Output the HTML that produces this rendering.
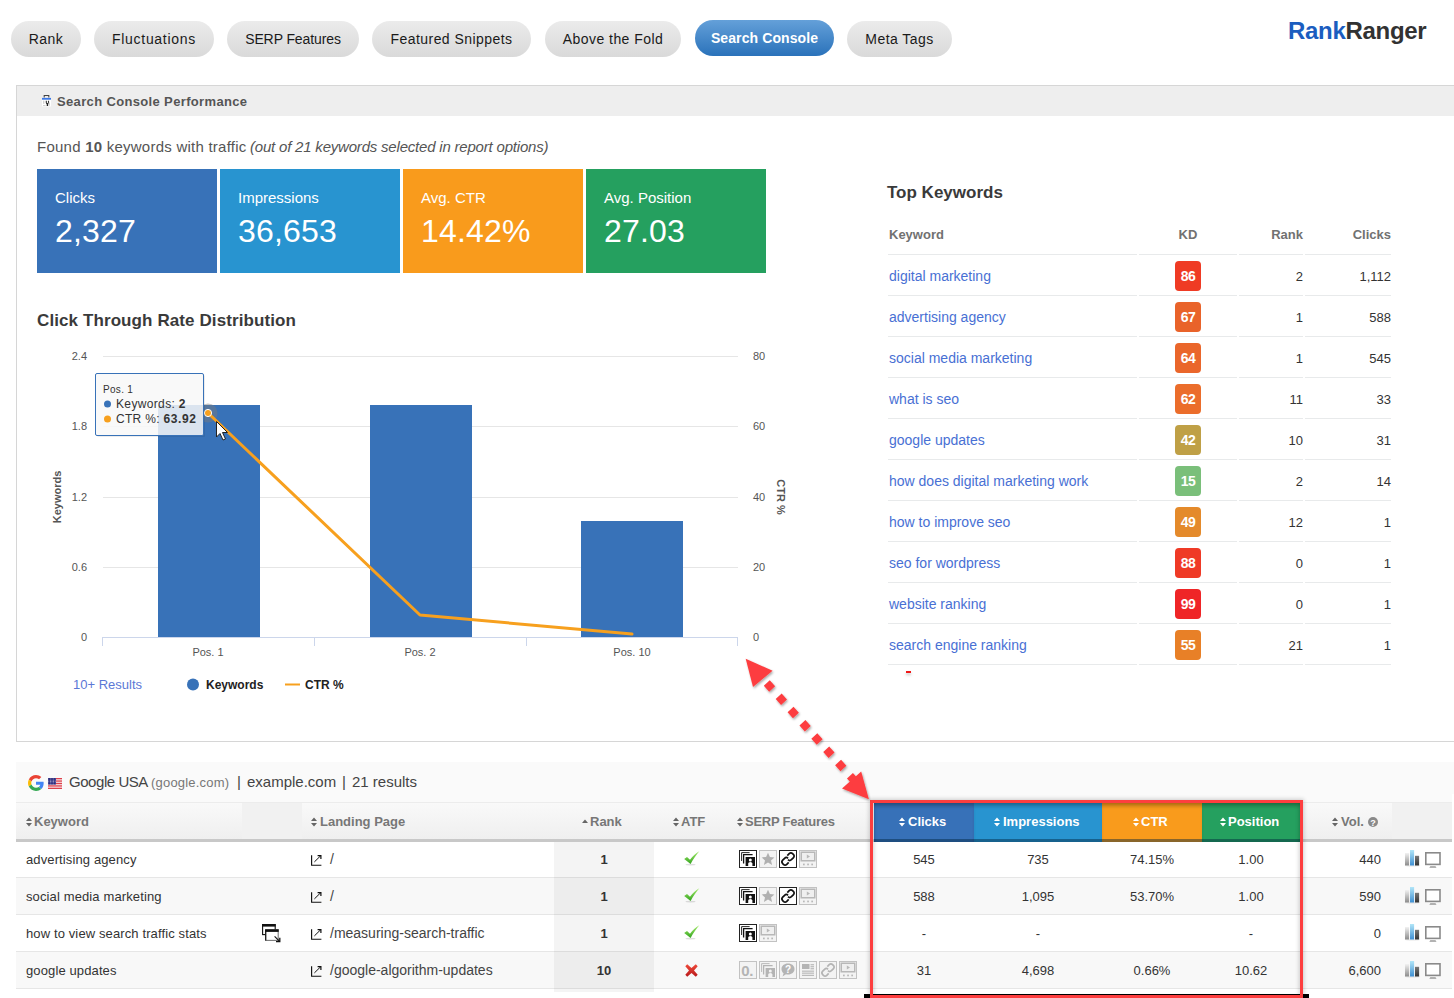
<!DOCTYPE html>
<html><head><meta charset="utf-8">
<style>
*{box-sizing:border-box;margin:0;padding:0}
html,body{width:1454px;height:998px;overflow:hidden;background:#fff}
body{font-family:"Liberation Sans",sans-serif;color:#333;position:relative}
.a{position:absolute;white-space:nowrap}
.tab{position:absolute;top:21px;height:36px;border-radius:18px;background:linear-gradient(#ebebeb,#d9d9d9);color:#1a1a1a;font-size:14px;line-height:36px;text-align:center;letter-spacing:0.45px}
.tab.on{top:20px;background:linear-gradient(#64a0d9,#2a72ba);color:#fff;font-weight:bold;letter-spacing:0.1px}
.logo{position:absolute;left:1288px;top:16px;font-size:24px;font-weight:bold;letter-spacing:-0.3px;line-height:30px}
.panel{position:absolute;left:16px;top:85px;width:1460px;height:657px;border:1px solid #d6d6d6;border-right:none}
.phead{position:absolute;left:0;top:0;right:0;height:30px;background:#eee}
.box{position:absolute;top:169px;width:180px;height:104px;color:#fff}
.box .l{position:absolute;left:18px;top:20px;font-size:15px;line-height:18px}
.box .v{position:absolute;left:18px;top:44px;font-size:32px;line-height:36px;letter-spacing:0.2px}
</style></head><body>

<div class="tab" style="left:11px;width:70px">Rank</div>
<div class="tab" style="left:94px;width:120px;letter-spacing:0.7px">Fluctuations</div>
<div class="tab" style="left:227px;width:132px;letter-spacing:-0.1px">SERP Features</div>
<div class="tab" style="left:372px;width:159px">Featured Snippets</div>
<div class="tab" style="left:545px;width:136px">Above the Fold</div>
<div class="tab on" style="left:695px;width:139px">Search Console</div>
<div class="tab" style="left:847px;width:105px">Meta Tags</div>

<div class="logo"><span style="color:#1b5dbf">Rank</span><span style="color:#323232">Ranger</span></div>

<div class="panel">
  <div class="phead"></div>
</div>

<div class="a" style="left:41px;top:93px;width:11px;height:13px"><svg width="11" height="13" viewBox="0 0 11 13"><rect x="1" y="5.4" width="9" height="7" fill="#fff"/><path d="M3.2 3.6 V1.5 H7.8 V3.6" fill="none" stroke="#444" stroke-width="1.1"/><rect x="1" y="3.9" width="9" height="1.8" fill="#3b78e7"/><rect x="2.2" y="6.6" width="1.1" height="3.2" fill="#c8c8c8"/><rect x="2" y="11.2" width="2.6" height="0.8" fill="#c8c8c8"/><path d="M5.3 6.8 V8.5 Q5.3 9.6 6.4 9.6 Q7.5 9.6 7.5 8.5 V6.8" fill="none" stroke="#333" stroke-width="1.1"/><path d="M6.4 9.4 V12" stroke="#222" stroke-width="1.4"/><rect x="7.6" y="8.5" width="1" height="3.2" fill="#bbb"/></svg></div>
<div class="a" style="left:57px;top:94px;font-size:13px;font-weight:bold;color:#555;line-height:16px;letter-spacing:0.35px">Search Console Performance</div>

<div class="a" style="left:37px;top:138px;font-size:15px;color:#555;line-height:18px;letter-spacing:0.24px">Found <b>10</b> keywords with traffic</div>
<div class="a" style="left:250px;top:138px;font-size:15px;color:#555;line-height:18px;letter-spacing:-0.2px;font-style:italic">(out of 21 keywords selected in report options)</div>

<div class="box" style="left:37px;background:#3872b8"><div class="l">Clicks</div><div class="v">2,327</div></div>
<div class="box" style="left:220px;background:#2894d0"><div class="l">Impressions</div><div class="v">36,653</div></div>
<div class="box" style="left:403px;background:#f99b1c"><div class="l">Avg. CTR</div><div class="v">14.42%</div></div>
<div class="box" style="left:586px;background:#25a05f"><div class="l">Avg. Position</div><div class="v">27.03</div></div>

<div class="a" style="left:37px;top:311px;font-size:17px;font-weight:bold;color:#3a3a3a;line-height:20px;letter-spacing:0.1px">Click Through Rate Distribution</div>

<svg class="a" style="left:0;top:0" width="1454" height="998" viewBox="0 0 1454 998" font-family="Liberation Sans, sans-serif">
<g stroke="#e6e6e6" stroke-width="1">
<line x1="103" y1="356.5" x2="738" y2="356.5"/><line x1="103" y1="426.5" x2="738" y2="426.5"/><line x1="103" y1="497.5" x2="738" y2="497.5"/><line x1="103" y1="567.5" x2="738" y2="567.5"/>
</g>
<g stroke="#ccd6eb" stroke-width="1">
<line x1="103" y1="637.5" x2="738" y2="637.5"/>
<line x1="102.5" y1="637" x2="102.5" y2="646"/><line x1="314.5" y1="637" x2="314.5" y2="646"/><line x1="526.5" y1="637" x2="526.5" y2="646"/><line x1="737.5" y1="637" x2="737.5" y2="646"/>
</g>
<g fill="#3872b8">
<rect x="158" y="405" width="102" height="232"/><rect x="370" y="405" width="102" height="232"/><rect x="581" y="521" width="102" height="116"/>
</g>
<circle cx="208" cy="413" r="9.5" fill="rgba(125,125,125,0.45)"/>
<polyline points="208,413 420,615 632,634" fill="none" stroke="#f7a01e" stroke-width="3" stroke-linejoin="round" stroke-linecap="round"/>
<circle cx="208" cy="413" r="3.6" fill="#f7a01e" stroke="#fff" stroke-width="1"/>
<g font-size="11" fill="#555" text-anchor="end">
<text x="87" y="360">2.4</text><text x="87" y="430">1.8</text><text x="87" y="501">1.2</text><text x="87" y="571">0.6</text><text x="87" y="641">0</text>
</g>
<g font-size="11" fill="#555" text-anchor="start">
<text x="753" y="360">80</text><text x="753" y="430">60</text><text x="753" y="501">40</text><text x="753" y="571">20</text><text x="753" y="641">0</text>
</g>
<g font-size="11" fill="#555" text-anchor="middle">
<text x="208" y="656">Pos. 1</text><text x="420" y="656">Pos. 2</text><text x="632" y="656">Pos. 10</text>
</g>
<text transform="translate(61,497) rotate(-90)" font-size="11" font-weight="bold" fill="#555" text-anchor="middle">Keywords</text>
<text transform="translate(777,497) rotate(90)" font-size="11" font-weight="bold" fill="#555" text-anchor="middle">CTR %</text>
<text x="73" y="689" font-size="13" fill="#5b78d6">10+ Results</text>
<circle cx="193" cy="684.5" r="6" fill="#3872b8"/>
<text x="206" y="689" font-size="12" font-weight="bold" fill="#222">Keywords</text>
<line x1="285" y1="684.5" x2="300" y2="684.5" stroke="#f7a01e" stroke-width="2"/>
<text x="305" y="689" font-size="12" font-weight="bold" fill="#222">CTR %</text>
<path d="M204 375.5 V436 H97.5" fill="none" stroke="rgba(0,0,0,0.1)" stroke-width="1.5"/><rect x="95.5" y="373.5" width="108" height="62" rx="1.5" fill="rgba(248,248,248,0.85)" stroke="#3872b8" stroke-width="1"/>
<text x="103" y="393" font-size="10" fill="#333" letter-spacing="0.3">Pos. 1</text>
<circle cx="107.5" cy="404" r="3.5" fill="#3872b8"/>
<text x="116" y="408" font-size="12" fill="#333" letter-spacing="0.35">Keywords: <tspan font-weight="bold">2</tspan></text>
<circle cx="107.5" cy="419" r="3.5" fill="#f7a01e"/>
<text x="116" y="423" font-size="12" fill="#333" letter-spacing="0.3">CTR %: <tspan font-weight="bold" letter-spacing="0.6">63.92</tspan></text>
<path d="M216.5 421.5 L216.5 437 L220 433.5 L223 440 L225.5 439 L222.5 432.5 L227.5 432.5 Z" fill="#fff" stroke="#222" stroke-width="1"/>
</svg>
<div class="a" style="left:887px;top:183px;font-size:17px;font-weight:bold;color:#3a3a3a;line-height:20px">Top Keywords</div>
<div class="a" style="left:889px;top:226px;font-size:13px;font-weight:bold;color:#717171;line-height:18px">Keyword</div>
<div class="a" style="left:1139px;width:98px;top:226px;font-size:13px;font-weight:bold;color:#717171;line-height:18px;text-align:center">KD</div>
<div class="a" style="left:1239px;width:64px;top:226px;font-size:13px;font-weight:bold;color:#717171;line-height:18px;text-align:right">Rank</div>
<div class="a" style="left:1305px;width:86px;top:226px;font-size:13px;font-weight:bold;color:#717171;line-height:18px;text-align:right">Clicks</div>
<div class="a" style="left:888px;top:254px;width:249px;height:1px;background:#e8eaeb"></div><div class="a" style="left:1139px;top:254px;width:98px;height:1px;background:#e8eaeb"></div><div class="a" style="left:1239px;top:254px;width:64px;height:1px;background:#e8eaeb"></div><div class="a" style="left:1305px;top:254px;width:86px;height:1px;background:#e8eaeb"></div><div class="a" style="left:889px;top:267px;font-size:14px;color:#4870d4;line-height:18px">digital marketing</div><div class="a" style="left:1175px;top:261px;width:26px;height:30px;border-radius:4px;background:#ef3b24;color:#fff;font-size:14px;font-weight:bold;line-height:30px;text-align:center;letter-spacing:-0.6px">86</div><div class="a" style="left:1239px;width:64px;top:268px;font-size:13px;color:#333;line-height:18px;text-align:right">2</div><div class="a" style="left:1305px;width:86px;top:268px;font-size:13px;color:#333;line-height:18px;text-align:right">1,112</div><div class="a" style="left:888px;top:295px;width:249px;height:1px;background:#e8eaeb"></div><div class="a" style="left:1139px;top:295px;width:98px;height:1px;background:#e8eaeb"></div><div class="a" style="left:1239px;top:295px;width:64px;height:1px;background:#e8eaeb"></div><div class="a" style="left:1305px;top:295px;width:86px;height:1px;background:#e8eaeb"></div><div class="a" style="left:889px;top:308px;font-size:14px;color:#4870d4;line-height:18px">advertising agency</div><div class="a" style="left:1175px;top:302px;width:26px;height:30px;border-radius:4px;background:#e9632a;color:#fff;font-size:14px;font-weight:bold;line-height:30px;text-align:center;letter-spacing:-0.6px">67</div><div class="a" style="left:1239px;width:64px;top:309px;font-size:13px;color:#333;line-height:18px;text-align:right">1</div><div class="a" style="left:1305px;width:86px;top:309px;font-size:13px;color:#333;line-height:18px;text-align:right">588</div><div class="a" style="left:888px;top:336px;width:249px;height:1px;background:#e8eaeb"></div><div class="a" style="left:1139px;top:336px;width:98px;height:1px;background:#e8eaeb"></div><div class="a" style="left:1239px;top:336px;width:64px;height:1px;background:#e8eaeb"></div><div class="a" style="left:1305px;top:336px;width:86px;height:1px;background:#e8eaeb"></div><div class="a" style="left:889px;top:349px;font-size:14px;color:#4870d4;line-height:18px">social media marketing</div><div class="a" style="left:1175px;top:343px;width:26px;height:30px;border-radius:4px;background:#ea662b;color:#fff;font-size:14px;font-weight:bold;line-height:30px;text-align:center;letter-spacing:-0.6px">64</div><div class="a" style="left:1239px;width:64px;top:350px;font-size:13px;color:#333;line-height:18px;text-align:right">1</div><div class="a" style="left:1305px;width:86px;top:350px;font-size:13px;color:#333;line-height:18px;text-align:right">545</div><div class="a" style="left:888px;top:377px;width:249px;height:1px;background:#e8eaeb"></div><div class="a" style="left:1139px;top:377px;width:98px;height:1px;background:#e8eaeb"></div><div class="a" style="left:1239px;top:377px;width:64px;height:1px;background:#e8eaeb"></div><div class="a" style="left:1305px;top:377px;width:86px;height:1px;background:#e8eaeb"></div><div class="a" style="left:889px;top:390px;font-size:14px;color:#4870d4;line-height:18px">what is seo</div><div class="a" style="left:1175px;top:384px;width:26px;height:30px;border-radius:4px;background:#eb6d2b;color:#fff;font-size:14px;font-weight:bold;line-height:30px;text-align:center;letter-spacing:-0.6px">62</div><div class="a" style="left:1239px;width:64px;top:391px;font-size:13px;color:#333;line-height:18px;text-align:right">11</div><div class="a" style="left:1305px;width:86px;top:391px;font-size:13px;color:#333;line-height:18px;text-align:right">33</div><div class="a" style="left:888px;top:418px;width:249px;height:1px;background:#e8eaeb"></div><div class="a" style="left:1139px;top:418px;width:98px;height:1px;background:#e8eaeb"></div><div class="a" style="left:1239px;top:418px;width:64px;height:1px;background:#e8eaeb"></div><div class="a" style="left:1305px;top:418px;width:86px;height:1px;background:#e8eaeb"></div><div class="a" style="left:889px;top:431px;font-size:14px;color:#4870d4;line-height:18px">google updates</div><div class="a" style="left:1175px;top:425px;width:26px;height:30px;border-radius:4px;background:#bfa046;color:#fff;font-size:14px;font-weight:bold;line-height:30px;text-align:center;letter-spacing:-0.6px">42</div><div class="a" style="left:1239px;width:64px;top:432px;font-size:13px;color:#333;line-height:18px;text-align:right">10</div><div class="a" style="left:1305px;width:86px;top:432px;font-size:13px;color:#333;line-height:18px;text-align:right">31</div><div class="a" style="left:888px;top:459px;width:249px;height:1px;background:#e8eaeb"></div><div class="a" style="left:1139px;top:459px;width:98px;height:1px;background:#e8eaeb"></div><div class="a" style="left:1239px;top:459px;width:64px;height:1px;background:#e8eaeb"></div><div class="a" style="left:1305px;top:459px;width:86px;height:1px;background:#e8eaeb"></div><div class="a" style="left:889px;top:472px;font-size:14px;color:#4870d4;line-height:18px">how does digital marketing work</div><div class="a" style="left:1175px;top:466px;width:26px;height:30px;border-radius:4px;background:#7abf7a;color:#fff;font-size:14px;font-weight:bold;line-height:30px;text-align:center;letter-spacing:-0.6px">15</div><div class="a" style="left:1239px;width:64px;top:473px;font-size:13px;color:#333;line-height:18px;text-align:right">2</div><div class="a" style="left:1305px;width:86px;top:473px;font-size:13px;color:#333;line-height:18px;text-align:right">14</div><div class="a" style="left:888px;top:500px;width:249px;height:1px;background:#e8eaeb"></div><div class="a" style="left:1139px;top:500px;width:98px;height:1px;background:#e8eaeb"></div><div class="a" style="left:1239px;top:500px;width:64px;height:1px;background:#e8eaeb"></div><div class="a" style="left:1305px;top:500px;width:86px;height:1px;background:#e8eaeb"></div><div class="a" style="left:889px;top:513px;font-size:14px;color:#4870d4;line-height:18px">how to improve seo</div><div class="a" style="left:1175px;top:507px;width:26px;height:30px;border-radius:4px;background:#e48a2b;color:#fff;font-size:14px;font-weight:bold;line-height:30px;text-align:center;letter-spacing:-0.6px">49</div><div class="a" style="left:1239px;width:64px;top:514px;font-size:13px;color:#333;line-height:18px;text-align:right">12</div><div class="a" style="left:1305px;width:86px;top:514px;font-size:13px;color:#333;line-height:18px;text-align:right">1</div><div class="a" style="left:888px;top:541px;width:249px;height:1px;background:#e8eaeb"></div><div class="a" style="left:1139px;top:541px;width:98px;height:1px;background:#e8eaeb"></div><div class="a" style="left:1239px;top:541px;width:64px;height:1px;background:#e8eaeb"></div><div class="a" style="left:1305px;top:541px;width:86px;height:1px;background:#e8eaeb"></div><div class="a" style="left:889px;top:554px;font-size:14px;color:#4870d4;line-height:18px">seo for wordpress</div><div class="a" style="left:1175px;top:548px;width:26px;height:30px;border-radius:4px;background:#ef3a26;color:#fff;font-size:14px;font-weight:bold;line-height:30px;text-align:center;letter-spacing:-0.6px">88</div><div class="a" style="left:1239px;width:64px;top:555px;font-size:13px;color:#333;line-height:18px;text-align:right">0</div><div class="a" style="left:1305px;width:86px;top:555px;font-size:13px;color:#333;line-height:18px;text-align:right">1</div><div class="a" style="left:888px;top:582px;width:249px;height:1px;background:#e8eaeb"></div><div class="a" style="left:1139px;top:582px;width:98px;height:1px;background:#e8eaeb"></div><div class="a" style="left:1239px;top:582px;width:64px;height:1px;background:#e8eaeb"></div><div class="a" style="left:1305px;top:582px;width:86px;height:1px;background:#e8eaeb"></div><div class="a" style="left:889px;top:595px;font-size:14px;color:#4870d4;line-height:18px">website ranking</div><div class="a" style="left:1175px;top:589px;width:26px;height:30px;border-radius:4px;background:#ef2527;color:#fff;font-size:14px;font-weight:bold;line-height:30px;text-align:center;letter-spacing:-0.6px">99</div><div class="a" style="left:1239px;width:64px;top:596px;font-size:13px;color:#333;line-height:18px;text-align:right">0</div><div class="a" style="left:1305px;width:86px;top:596px;font-size:13px;color:#333;line-height:18px;text-align:right">1</div><div class="a" style="left:888px;top:623px;width:249px;height:1px;background:#e8eaeb"></div><div class="a" style="left:1139px;top:623px;width:98px;height:1px;background:#e8eaeb"></div><div class="a" style="left:1239px;top:623px;width:64px;height:1px;background:#e8eaeb"></div><div class="a" style="left:1305px;top:623px;width:86px;height:1px;background:#e8eaeb"></div><div class="a" style="left:889px;top:636px;font-size:14px;color:#4870d4;line-height:18px">search engine ranking</div><div class="a" style="left:1175px;top:630px;width:26px;height:30px;border-radius:4px;background:#e88027;color:#fff;font-size:14px;font-weight:bold;line-height:30px;text-align:center;letter-spacing:-0.6px">55</div><div class="a" style="left:1239px;width:64px;top:637px;font-size:13px;color:#333;line-height:18px;text-align:right">21</div><div class="a" style="left:1305px;width:86px;top:637px;font-size:13px;color:#333;line-height:18px;text-align:right">1</div><div class="a" style="left:888px;top:664px;width:249px;height:1px;background:#e8eaeb"></div><div class="a" style="left:1139px;top:664px;width:98px;height:1px;background:#e8eaeb"></div><div class="a" style="left:1239px;top:664px;width:64px;height:1px;background:#e8eaeb"></div><div class="a" style="left:1305px;top:664px;width:86px;height:1px;background:#e8eaeb"></div><div class="a" style="left:906px;top:671px;width:5px;height:2px;background:#f01818;box-shadow:0 2px 3px rgba(0,0,0,0.25)"></div>
<div class="a" style="left:16px;top:762px;width:1438px;height:32px;background:#fafafa"></div><div class="a" style="left:16px;top:794px;width:1436px;height:8px;background:#fafafa"></div><svg class="a" style="left:28px;top:775px" width="16" height="16" viewBox="0 0 48 48"><path fill="#EA4335" d="M24 9.5c3.54 0 6.71 1.22 9.21 3.6l6.85-6.85C35.9 2.38 30.47 0 24 0 14.62 0 6.51 5.38 2.56 13.22l7.98 6.19C12.43 13.72 17.74 9.5 24 9.5z"/><path fill="#4285F4" d="M46.98 24.55c0-1.57-.15-3.09-.38-4.55H24v9.02h12.94c-.58 2.96-2.26 5.48-4.78 7.18l7.73 6c4.51-4.18 7.09-10.36 7.09-17.65z"/><path fill="#FBBC05" d="M10.53 28.59c-.48-1.45-.76-2.99-.76-4.59s.27-3.14.76-4.59l-7.98-6.19C.92 16.46 0 20.12 0 24c0 3.88.92 7.54 2.56 10.78l7.97-6.19z"/><path fill="#34A853" d="M24 48c6.48 0 11.93-2.13 15.89-5.81l-7.73-6c-2.15 1.45-4.92 2.3-8.16 2.3-6.26 0-11.57-4.22-13.47-9.91l-7.98 6.19C6.51 42.62 14.62 48 24 48z"/></svg><svg class="a" style="left:48px;top:778px" width="14" height="11" viewBox="0 0 14 11"><rect width="14" height="11" fill="#fff"/><rect y="0.00" width="14" height="0.85" fill="#d61f2c"/><rect y="1.69" width="14" height="0.85" fill="#d61f2c"/><rect y="3.38" width="14" height="0.85" fill="#d61f2c"/><rect y="5.08" width="14" height="0.85" fill="#d61f2c"/><rect y="6.77" width="14" height="0.85" fill="#d61f2c"/><rect y="8.46" width="14" height="0.85" fill="#d61f2c"/><rect y="10.15" width="14" height="0.85" fill="#d61f2c"/><rect width="8" height="6.6" fill="#23237a"/><circle cx="0.90" cy="0.90" r="0.42" fill="#fff"/><circle cx="2.45" cy="0.90" r="0.42" fill="#fff"/><circle cx="4.00" cy="0.90" r="0.42" fill="#fff"/><circle cx="5.55" cy="0.90" r="0.42" fill="#fff"/><circle cx="7.10" cy="0.90" r="0.42" fill="#fff"/><circle cx="0.90" cy="2.20" r="0.42" fill="#fff"/><circle cx="2.45" cy="2.20" r="0.42" fill="#fff"/><circle cx="4.00" cy="2.20" r="0.42" fill="#fff"/><circle cx="5.55" cy="2.20" r="0.42" fill="#fff"/><circle cx="7.10" cy="2.20" r="0.42" fill="#fff"/><circle cx="0.90" cy="3.50" r="0.42" fill="#fff"/><circle cx="2.45" cy="3.50" r="0.42" fill="#fff"/><circle cx="4.00" cy="3.50" r="0.42" fill="#fff"/><circle cx="5.55" cy="3.50" r="0.42" fill="#fff"/><circle cx="7.10" cy="3.50" r="0.42" fill="#fff"/><circle cx="0.90" cy="4.80" r="0.42" fill="#fff"/><circle cx="2.45" cy="4.80" r="0.42" fill="#fff"/><circle cx="4.00" cy="4.80" r="0.42" fill="#fff"/><circle cx="5.55" cy="4.80" r="0.42" fill="#fff"/><circle cx="7.10" cy="4.80" r="0.42" fill="#fff"/><circle cx="0.90" cy="6.10" r="0.42" fill="#fff"/><circle cx="2.45" cy="6.10" r="0.42" fill="#fff"/><circle cx="4.00" cy="6.10" r="0.42" fill="#fff"/><circle cx="5.55" cy="6.10" r="0.42" fill="#fff"/><circle cx="7.10" cy="6.10" r="0.42" fill="#fff"/></svg><div class="a" style="left:69px;letter-spacing:-0.45px;top:772px;font-size:15px;line-height:20px;color:#444">Google USA</div><div class="a" style="left:151px;top:773px;font-size:13px;line-height:20px;color:#777;letter-spacing:0.2px">(google.com)</div><div class="a" style="left:237px;top:772px;font-size:15px;line-height:20px;color:#444">|</div><div class="a" style="left:247px;top:772px;font-size:15px;line-height:20px;color:#444">example.com</div><div class="a" style="left:342px;top:772px;font-size:15px;line-height:20px;color:#444">|</div><div class="a" style="left:352px;top:772px;font-size:15px;line-height:20px;color:#444">21 results</div><div class="a" style="left:16px;top:802px;width:1436px;height:1px;background:#ececec"></div><div class="a" style="left:16px;top:803px;width:1436px;height:36px;background:linear-gradient(#f9f9f9,#efefef)"></div><div class="a" style="left:242px;top:803px;width:60px;height:36px;background:#f1f1f1"></div><div class="a" style="left:1392px;top:803px;width:60px;height:36px;background:#f1f1f1"></div><div class="a" style="left:16px;top:839px;width:1436px;height:3px;background:#c8c8c8"></div><svg width="6" height="10" viewBox="0 0 6 10" style="position:absolute;left:26px;top:817px"><path d="M0 4 L3 0.5 L6 4 Z M0 6 L3 9.5 L6 6 Z" fill="#666"/></svg><div class="a" style="left:34px;font-size:13px;font-weight:bold;color:#777;line-height:18px;top:813px">Keyword</div><svg width="6" height="10" viewBox="0 0 6 10" style="position:absolute;left:311px;top:817px"><path d="M0 4 L3 0.5 L6 4 Z M0 6 L3 9.5 L6 6 Z" fill="#666"/></svg><div class="a" style="left:320px;font-size:13px;font-weight:bold;color:#777;line-height:18px;top:813px">Landing Page</div><svg width="6" height="5" viewBox="0 0 6 5" style="position:absolute;left:582px;top:819px"><path d="M0 4 L3 0.5 L6 4 Z" fill="#666"/></svg><div class="a" style="left:590px;font-size:13px;font-weight:bold;color:#777;line-height:18px;top:813px">Rank</div><svg width="6" height="10" viewBox="0 0 6 10" style="position:absolute;left:673px;top:817px"><path d="M0 4 L3 0.5 L6 4 Z M0 6 L3 9.5 L6 6 Z" fill="#666"/></svg><div class="a" style="left:681px;font-size:13px;font-weight:bold;color:#777;line-height:18px;top:813px">ATF</div><svg width="6" height="10" viewBox="0 0 6 10" style="position:absolute;left:737px;top:817px"><path d="M0 4 L3 0.5 L6 4 Z M0 6 L3 9.5 L6 6 Z" fill="#666"/></svg><div class="a" style="left:745px;letter-spacing:-0.25px;font-size:13px;font-weight:bold;color:#777;line-height:18px;top:813px">SERP Features</div><svg width="6" height="10" viewBox="0 0 6 10" style="position:absolute;left:1332px;top:817px"><path d="M0 4 L3 0.5 L6 4 Z M0 6 L3 9.5 L6 6 Z" fill="#666"/></svg><div class="a" style="left:1341px;font-size:13px;font-weight:bold;color:#777;line-height:18px;top:813px">Vol.</div><svg class="a" style="left:1368px;top:817px" width="10" height="10" viewBox="0 0 10 10"><circle cx="5" cy="5" r="5" fill="#8a8a8a"/><text x="5" y="8.6" font-size="9" font-weight="bold" fill="#fff" text-anchor="middle" font-family="Liberation Sans">?</text></svg><div class="a" style="left:16px;top:842px;width:1436px;height:35px;background:#fff"></div><div class="a" style="left:16px;top:877px;width:1436px;height:1px;background:#e6e6e6"></div><div class="a" style="left:16px;top:878px;width:1436px;height:36px;background:#f8f8f8"></div><div class="a" style="left:16px;top:914px;width:1436px;height:1px;background:#e6e6e6"></div><div class="a" style="left:16px;top:915px;width:1436px;height:36px;background:#fff"></div><div class="a" style="left:16px;top:951px;width:1436px;height:1px;background:#e6e6e6"></div><div class="a" style="left:16px;top:952px;width:1436px;height:36px;background:#f8f8f8"></div><div class="a" style="left:16px;top:988px;width:1436px;height:1px;background:#e6e6e6"></div><div class="a" style="left:554px;top:842px;width:100px;height:150px;background:rgba(0,0,0,0.045)"></div><div class="a" style="left:26px;top:851px;letter-spacing:0.12px;font-size:13px;color:#333;line-height:18px">advertising agency</div><svg width="12" height="11" viewBox="0 0 12 11" style="position:absolute;left:311px;top:855px"><path d="M0.6 0.3 V10.2 H10.4" fill="none" stroke="#111" stroke-width="1.15"/><path d="M3.4 6.9 L9.8 0.6" fill="none" stroke="#111" stroke-width="1"/><path d="M6.6 0.6 H9.9 V3.9" fill="none" stroke="#111" stroke-width="1.2"/></svg><div class="a" style="left:330px;top:850px;font-size:14px;color:#444;line-height:18px">/</div><div class="a" style="left:554px;width:100px;top:851px;text-align:center;font-weight:bold;font-size:13px;color:#333;line-height:18px">1</div><svg width="16" height="15" viewBox="0 0 16 15" style="position:absolute;left:684px;top:851px"><defs><linearGradient id="cg0" x1="0" y1="0" x2="0" y2="1"><stop offset="0" stop-color="#a6ec6c"/><stop offset="1" stop-color="#34a51f"/></linearGradient></defs><ellipse cx="6.5" cy="13.6" rx="5" ry="0.9" fill="rgba(0,0,0,0.13)"/><path d="M0.2 8.0 L3.0 5.9 L6.0 8.8 C8.6 5.0 11.6 2.2 15.3 0.2 C12.4 3.6 9.4 7.8 6.6 13.0 Z" fill="url(#cg0)"/></svg><svg width="18" height="18" viewBox="0 0 18 18" style="position:absolute;left:739px;top:850px"><rect x="0.5" y="0.5" width="17" height="17" fill="#fff" stroke="#222" stroke-width="1"/><path d="M2.6 11 V2.6 H10.6" stroke="#111" stroke-width="0.9" fill="none"/><path d="M4.6 13.6 V4.6 H13.6" stroke="#111" stroke-width="1.3" fill="none"/><rect x="6.6" y="7" width="9.4" height="9" fill="#111"/><circle cx="11.3" cy="10" r="1.5" fill="#fff"/><path d="M9.2 16 V13.6 Q9.2 12 11.3 12 Q13.4 12 13.4 13.6 V16 Z" fill="#fff"/></svg><svg width="18" height="18" viewBox="0 0 18 18" style="position:absolute;left:759px;top:850px"><rect x="0.5" y="0.5" width="17" height="17" fill="#f3f3f3" stroke="#c2c2c2" stroke-width="1"/><path d="M9 2.8 L10.9 7.1 L15.4 7.4 L12 10.4 L13.1 14.9 L9 12.4 L4.9 14.9 L6 10.4 L2.6 7.4 L7.1 7.1 Z" fill="#b0b0b0"/></svg><svg width="18" height="18" viewBox="0 0 18 18" style="position:absolute;left:779px;top:850px"><rect x="0.5" y="0.5" width="17" height="17" fill="#fff" stroke="#222" stroke-width="1"/><g fill="none" stroke="#111" stroke-width="1.7"><path d="M8.3 5.6 L10.2 3.7 Q11.9 2 13.6 3.7 L14.3 4.4 Q16 6.1 14.3 7.8 L12.4 9.7 Q10.7 11.4 9 9.7"/><path d="M9.7 12.4 L7.8 14.3 Q6.1 16 4.4 14.3 L3.7 13.6 Q2 11.9 3.7 10.2 L5.6 8.3 Q7.3 6.6 9 8.3"/></g></svg><svg width="18" height="18" viewBox="0 0 18 18" style="position:absolute;left:799px;top:850px"><rect x="0.5" y="0.5" width="17" height="17" fill="#f3f3f3" stroke="#c2c2c2" stroke-width="1"/><rect x="1.5" y="1.5" width="15" height="10" fill="#b8b8b8"/><rect x="3" y="3" width="12" height="7" fill="#efefef"/><path d="M7.8 4.6 L11 6.5 L7.8 8.4 Z" fill="#b8b8b8"/><rect x="4" y="13.6" width="1.7" height="1.7" fill="#b8b8b8"/><rect x="8.2" y="13.6" width="1.7" height="1.7" fill="#b8b8b8"/><rect x="12.3" y="13.6" width="1.7" height="1.7" fill="#b8b8b8"/></svg><div class="a" style="left:874px;width:100px;top:851px;text-align:center;font-size:13px;color:#333;line-height:18px">545</div><div class="a" style="left:974px;width:128px;top:851px;text-align:center;font-size:13px;color:#333;line-height:18px">735</div><div class="a" style="left:1102px;width:100px;top:851px;text-align:center;font-size:13px;color:#333;line-height:18px">74.15%</div><div class="a" style="left:1202px;width:98px;top:851px;text-align:center;font-size:13px;color:#333;line-height:18px">1.00</div><div class="a" style="left:1303px;width:78px;top:851px;text-align:right;font-size:13px;color:#333;line-height:18px">440</div><svg width="17" height="18" viewBox="0 0 17 18" style="position:absolute;left:1404px;top:849px"><defs><linearGradient id="g10" x1="0" y1="0" x2="0" y2="1"><stop offset="0" stop-color="#f2f2f2"/><stop offset="1" stop-color="#8c8c8c"/></linearGradient><linearGradient id="g20" x1="0" y1="0" x2="0" y2="1"><stop offset="0" stop-color="#b2e6f8"/><stop offset="1" stop-color="#3f8fd2"/></linearGradient><linearGradient id="g30" x1="0" y1="0" x2="0" y2="1"><stop offset="0" stop-color="#7a7a7a"/><stop offset="1" stop-color="#333"/></linearGradient></defs><ellipse cx="8.5" cy="16.8" rx="8" ry="0.9" fill="rgba(0,0,0,0.07)"/><rect x="1" y="4" width="4.1" height="12.5" fill="url(#g10)"/><rect x="6" y="1" width="4.1" height="15.5" fill="url(#g20)"/><rect x="11" y="6.8" width="4.1" height="9.7" fill="url(#g30)"/></svg><svg width="16" height="17" viewBox="0 0 16 17" style="position:absolute;left:1425px;top:852px"><rect x="0.8" y="0.8" width="14.2" height="11.6" fill="#fff" stroke="#8a8a8a" stroke-width="1.6"/><path d="M4.3 15.8 L5.3 14.2 H10.5 L11.5 15.8 Z" fill="#999"/></svg><div class="a" style="left:26px;top:888px;letter-spacing:0.12px;font-size:13px;color:#333;line-height:18px">social media marketing</div><svg width="12" height="11" viewBox="0 0 12 11" style="position:absolute;left:311px;top:892px"><path d="M0.6 0.3 V10.2 H10.4" fill="none" stroke="#111" stroke-width="1.15"/><path d="M3.4 6.9 L9.8 0.6" fill="none" stroke="#111" stroke-width="1"/><path d="M6.6 0.6 H9.9 V3.9" fill="none" stroke="#111" stroke-width="1.2"/></svg><div class="a" style="left:330px;top:887px;font-size:14px;color:#444;line-height:18px">/</div><div class="a" style="left:554px;width:100px;top:888px;text-align:center;font-weight:bold;font-size:13px;color:#333;line-height:18px">1</div><svg width="16" height="15" viewBox="0 0 16 15" style="position:absolute;left:684px;top:888px"><defs><linearGradient id="cg1" x1="0" y1="0" x2="0" y2="1"><stop offset="0" stop-color="#a6ec6c"/><stop offset="1" stop-color="#34a51f"/></linearGradient></defs><ellipse cx="6.5" cy="13.6" rx="5" ry="0.9" fill="rgba(0,0,0,0.13)"/><path d="M0.2 8.0 L3.0 5.9 L6.0 8.8 C8.6 5.0 11.6 2.2 15.3 0.2 C12.4 3.6 9.4 7.8 6.6 13.0 Z" fill="url(#cg1)"/></svg><svg width="18" height="18" viewBox="0 0 18 18" style="position:absolute;left:739px;top:887px"><rect x="0.5" y="0.5" width="17" height="17" fill="#fff" stroke="#222" stroke-width="1"/><path d="M2.6 11 V2.6 H10.6" stroke="#111" stroke-width="0.9" fill="none"/><path d="M4.6 13.6 V4.6 H13.6" stroke="#111" stroke-width="1.3" fill="none"/><rect x="6.6" y="7" width="9.4" height="9" fill="#111"/><circle cx="11.3" cy="10" r="1.5" fill="#fff"/><path d="M9.2 16 V13.6 Q9.2 12 11.3 12 Q13.4 12 13.4 13.6 V16 Z" fill="#fff"/></svg><svg width="18" height="18" viewBox="0 0 18 18" style="position:absolute;left:759px;top:887px"><rect x="0.5" y="0.5" width="17" height="17" fill="#f3f3f3" stroke="#c2c2c2" stroke-width="1"/><path d="M9 2.8 L10.9 7.1 L15.4 7.4 L12 10.4 L13.1 14.9 L9 12.4 L4.9 14.9 L6 10.4 L2.6 7.4 L7.1 7.1 Z" fill="#b0b0b0"/></svg><svg width="18" height="18" viewBox="0 0 18 18" style="position:absolute;left:779px;top:887px"><rect x="0.5" y="0.5" width="17" height="17" fill="#fff" stroke="#222" stroke-width="1"/><g fill="none" stroke="#111" stroke-width="1.7"><path d="M8.3 5.6 L10.2 3.7 Q11.9 2 13.6 3.7 L14.3 4.4 Q16 6.1 14.3 7.8 L12.4 9.7 Q10.7 11.4 9 9.7"/><path d="M9.7 12.4 L7.8 14.3 Q6.1 16 4.4 14.3 L3.7 13.6 Q2 11.9 3.7 10.2 L5.6 8.3 Q7.3 6.6 9 8.3"/></g></svg><svg width="18" height="18" viewBox="0 0 18 18" style="position:absolute;left:799px;top:887px"><rect x="0.5" y="0.5" width="17" height="17" fill="#f3f3f3" stroke="#c2c2c2" stroke-width="1"/><rect x="1.5" y="1.5" width="15" height="10" fill="#b8b8b8"/><rect x="3" y="3" width="12" height="7" fill="#efefef"/><path d="M7.8 4.6 L11 6.5 L7.8 8.4 Z" fill="#b8b8b8"/><rect x="4" y="13.6" width="1.7" height="1.7" fill="#b8b8b8"/><rect x="8.2" y="13.6" width="1.7" height="1.7" fill="#b8b8b8"/><rect x="12.3" y="13.6" width="1.7" height="1.7" fill="#b8b8b8"/></svg><div class="a" style="left:874px;width:100px;top:888px;text-align:center;font-size:13px;color:#333;line-height:18px">588</div><div class="a" style="left:974px;width:128px;top:888px;text-align:center;font-size:13px;color:#333;line-height:18px">1,095</div><div class="a" style="left:1102px;width:100px;top:888px;text-align:center;font-size:13px;color:#333;line-height:18px">53.70%</div><div class="a" style="left:1202px;width:98px;top:888px;text-align:center;font-size:13px;color:#333;line-height:18px">1.00</div><div class="a" style="left:1303px;width:78px;top:888px;text-align:right;font-size:13px;color:#333;line-height:18px">590</div><svg width="17" height="18" viewBox="0 0 17 18" style="position:absolute;left:1404px;top:886px"><defs><linearGradient id="g11" x1="0" y1="0" x2="0" y2="1"><stop offset="0" stop-color="#f2f2f2"/><stop offset="1" stop-color="#8c8c8c"/></linearGradient><linearGradient id="g21" x1="0" y1="0" x2="0" y2="1"><stop offset="0" stop-color="#b2e6f8"/><stop offset="1" stop-color="#3f8fd2"/></linearGradient><linearGradient id="g31" x1="0" y1="0" x2="0" y2="1"><stop offset="0" stop-color="#7a7a7a"/><stop offset="1" stop-color="#333"/></linearGradient></defs><ellipse cx="8.5" cy="16.8" rx="8" ry="0.9" fill="rgba(0,0,0,0.07)"/><rect x="1" y="4" width="4.1" height="12.5" fill="url(#g11)"/><rect x="6" y="1" width="4.1" height="15.5" fill="url(#g21)"/><rect x="11" y="6.8" width="4.1" height="9.7" fill="url(#g31)"/></svg><svg width="16" height="17" viewBox="0 0 16 17" style="position:absolute;left:1425px;top:889px"><rect x="0.8" y="0.8" width="14.2" height="11.6" fill="#fff" stroke="#8a8a8a" stroke-width="1.6"/><path d="M4.3 15.8 L5.3 14.2 H10.5 L11.5 15.8 Z" fill="#999"/></svg><div class="a" style="left:26px;top:925px;letter-spacing:0.12px;font-size:13px;color:#333;line-height:18px">how to view search traffic stats</div><svg width="12" height="11" viewBox="0 0 12 11" style="position:absolute;left:311px;top:929px"><path d="M0.6 0.3 V10.2 H10.4" fill="none" stroke="#111" stroke-width="1.15"/><path d="M3.4 6.9 L9.8 0.6" fill="none" stroke="#111" stroke-width="1"/><path d="M6.6 0.6 H9.9 V3.9" fill="none" stroke="#111" stroke-width="1.2"/></svg><div class="a" style="left:330px;top:924px;font-size:14px;color:#444;line-height:18px">/measuring-search-traffic</div><div class="a" style="left:554px;width:100px;top:925px;text-align:center;font-weight:bold;font-size:13px;color:#333;line-height:18px">1</div><svg width="16" height="15" viewBox="0 0 16 15" style="position:absolute;left:684px;top:925px"><defs><linearGradient id="cg2" x1="0" y1="0" x2="0" y2="1"><stop offset="0" stop-color="#a6ec6c"/><stop offset="1" stop-color="#34a51f"/></linearGradient></defs><ellipse cx="6.5" cy="13.6" rx="5" ry="0.9" fill="rgba(0,0,0,0.13)"/><path d="M0.2 8.0 L3.0 5.9 L6.0 8.8 C8.6 5.0 11.6 2.2 15.3 0.2 C12.4 3.6 9.4 7.8 6.6 13.0 Z" fill="url(#cg2)"/></svg><svg width="18" height="18" viewBox="0 0 18 18" style="position:absolute;left:739px;top:924px"><rect x="0.5" y="0.5" width="17" height="17" fill="#fff" stroke="#222" stroke-width="1"/><path d="M2.6 11 V2.6 H10.6" stroke="#111" stroke-width="0.9" fill="none"/><path d="M4.6 13.6 V4.6 H13.6" stroke="#111" stroke-width="1.3" fill="none"/><rect x="6.6" y="7" width="9.4" height="9" fill="#111"/><circle cx="11.3" cy="10" r="1.5" fill="#fff"/><path d="M9.2 16 V13.6 Q9.2 12 11.3 12 Q13.4 12 13.4 13.6 V16 Z" fill="#fff"/></svg><svg width="18" height="18" viewBox="0 0 18 18" style="position:absolute;left:759px;top:924px"><rect x="0.5" y="0.5" width="17" height="17" fill="#f3f3f3" stroke="#c2c2c2" stroke-width="1"/><rect x="1.5" y="1.5" width="15" height="10" fill="#b8b8b8"/><rect x="3" y="3" width="12" height="7" fill="#efefef"/><path d="M7.8 4.6 L11 6.5 L7.8 8.4 Z" fill="#b8b8b8"/><rect x="4" y="13.6" width="1.7" height="1.7" fill="#b8b8b8"/><rect x="8.2" y="13.6" width="1.7" height="1.7" fill="#b8b8b8"/><rect x="12.3" y="13.6" width="1.7" height="1.7" fill="#b8b8b8"/></svg><div class="a" style="left:874px;width:100px;top:925px;text-align:center;font-size:13px;color:#333;line-height:18px">-</div><div class="a" style="left:974px;width:128px;top:925px;text-align:center;font-size:13px;color:#333;line-height:18px">-</div><div class="a" style="left:1102px;width:100px;top:925px;text-align:center;font-size:13px;color:#333;line-height:18px"></div><div class="a" style="left:1202px;width:98px;top:925px;text-align:center;font-size:13px;color:#333;line-height:18px">-</div><div class="a" style="left:1303px;width:78px;top:925px;text-align:right;font-size:13px;color:#333;line-height:18px">0</div><svg width="17" height="18" viewBox="0 0 17 18" style="position:absolute;left:1404px;top:923px"><defs><linearGradient id="g12" x1="0" y1="0" x2="0" y2="1"><stop offset="0" stop-color="#f2f2f2"/><stop offset="1" stop-color="#8c8c8c"/></linearGradient><linearGradient id="g22" x1="0" y1="0" x2="0" y2="1"><stop offset="0" stop-color="#b2e6f8"/><stop offset="1" stop-color="#3f8fd2"/></linearGradient><linearGradient id="g32" x1="0" y1="0" x2="0" y2="1"><stop offset="0" stop-color="#7a7a7a"/><stop offset="1" stop-color="#333"/></linearGradient></defs><ellipse cx="8.5" cy="16.8" rx="8" ry="0.9" fill="rgba(0,0,0,0.07)"/><rect x="1" y="4" width="4.1" height="12.5" fill="url(#g12)"/><rect x="6" y="1" width="4.1" height="15.5" fill="url(#g22)"/><rect x="11" y="6.8" width="4.1" height="9.7" fill="url(#g32)"/></svg><svg width="16" height="17" viewBox="0 0 16 17" style="position:absolute;left:1425px;top:926px"><rect x="0.8" y="0.8" width="14.2" height="11.6" fill="#fff" stroke="#8a8a8a" stroke-width="1.6"/><path d="M4.3 15.8 L5.3 14.2 H10.5 L11.5 15.8 Z" fill="#999"/></svg><div class="a" style="left:26px;top:962px;letter-spacing:0.12px;font-size:13px;color:#333;line-height:18px">google updates</div><svg width="12" height="11" viewBox="0 0 12 11" style="position:absolute;left:311px;top:966px"><path d="M0.6 0.3 V10.2 H10.4" fill="none" stroke="#111" stroke-width="1.15"/><path d="M3.4 6.9 L9.8 0.6" fill="none" stroke="#111" stroke-width="1"/><path d="M6.6 0.6 H9.9 V3.9" fill="none" stroke="#111" stroke-width="1.2"/></svg><div class="a" style="left:330px;top:961px;font-size:14px;color:#444;line-height:18px">/google-algorithm-updates</div><div class="a" style="left:554px;width:100px;top:962px;text-align:center;font-weight:bold;font-size:13px;color:#333;line-height:18px">10</div><svg width="13" height="13" viewBox="0 0 13 13" style="position:absolute;left:685px;top:964px"><defs><linearGradient id="xg" x1="0" y1="0" x2="0" y2="1"><stop offset="0" stop-color="#ef4a3a"/><stop offset="1" stop-color="#b8191b"/></linearGradient></defs><path d="M2.2 0.3 L6.5 4 L10.8 0.3 L12.7 2.2 L9 6.5 L12.7 10.8 L10.8 12.7 L6.5 9 L2.2 12.7 L0.3 10.8 L4 6.5 L0.3 2.2 Z" fill="url(#xg)"/></svg><svg width="18" height="18" viewBox="0 0 18 18" style="position:absolute;left:739px;top:961px"><rect x="0.5" y="0.5" width="17" height="17" fill="#f3f3f3" stroke="#c2c2c2" stroke-width="1"/><text x="2.3" y="15" font-size="15" font-weight="bold" fill="#b4b4b4" font-family="Liberation Sans" letter-spacing="-0.5">0.</text></svg><svg width="18" height="18" viewBox="0 0 18 18" style="position:absolute;left:759px;top:961px"><rect x="0.5" y="0.5" width="17" height="17" fill="#f3f3f3" stroke="#c2c2c2" stroke-width="1"/><path d="M2.6 11 V2.6 H10.6" stroke="#b4b4b4" stroke-width="0.9" fill="none"/><path d="M4.6 13.6 V4.6 H13.6" stroke="#b4b4b4" stroke-width="1.3" fill="none"/><rect x="6.6" y="7" width="9.4" height="9" fill="#b4b4b4"/><circle cx="11.3" cy="10" r="1.5" fill="#f3f3f3"/><path d="M9.2 16 V13.6 Q9.2 12 11.3 12 Q13.4 12 13.4 13.6 V16 Z" fill="#f3f3f3"/></svg><svg width="18" height="18" viewBox="0 0 18 18" style="position:absolute;left:779px;top:961px"><rect x="0.5" y="0.5" width="17" height="17" fill="#f3f3f3" stroke="#c2c2c2" stroke-width="1"/><path d="M9 2.5 C12.9 2.5 15.5 4.9 15.5 8 C15.5 11.1 12.9 13.5 9 13.5 C8.3 13.5 7.6 13.4 7 13.2 L3.5 15.5 L4.6 12.3 C3.2 11.2 2.5 9.7 2.5 8 C2.5 4.9 5.1 2.5 9 2.5 Z" fill="#b4b4b4"/><text x="9" y="11.8" font-size="10" font-weight="bold" fill="#fff" text-anchor="middle" font-family="Liberation Sans">?</text></svg><svg width="18" height="18" viewBox="0 0 18 18" style="position:absolute;left:799px;top:961px"><rect x="0.5" y="0.5" width="17" height="17" fill="#f3f3f3" stroke="#c2c2c2" stroke-width="1"/><rect x="3" y="3" width="7.5" height="5" fill="#b4b4b4"/><rect x="11.5" y="3.2" width="3.5" height="1.1" fill="#b4b4b4"/><rect x="11.5" y="5.2" width="3.5" height="1.1" fill="#b4b4b4"/><rect x="11.5" y="7.2" width="3.5" height="1.1" fill="#b4b4b4"/><rect x="3" y="9.6" width="12" height="1.1" fill="#b4b4b4"/><rect x="3" y="11.6" width="12" height="1.1" fill="#b4b4b4"/><rect x="3" y="13.8" width="12" height="1.1" fill="#b4b4b4"/></svg><svg width="18" height="18" viewBox="0 0 18 18" style="position:absolute;left:819px;top:961px"><rect x="0.5" y="0.5" width="17" height="17" fill="#f3f3f3" stroke="#c2c2c2" stroke-width="1"/><g fill="none" stroke="#b4b4b4" stroke-width="1.7"><path d="M8.3 5.6 L10.2 3.7 Q11.9 2 13.6 3.7 L14.3 4.4 Q16 6.1 14.3 7.8 L12.4 9.7 Q10.7 11.4 9 9.7"/><path d="M9.7 12.4 L7.8 14.3 Q6.1 16 4.4 14.3 L3.7 13.6 Q2 11.9 3.7 10.2 L5.6 8.3 Q7.3 6.6 9 8.3"/></g></svg><svg width="18" height="18" viewBox="0 0 18 18" style="position:absolute;left:839px;top:961px"><rect x="0.5" y="0.5" width="17" height="17" fill="#f3f3f3" stroke="#c2c2c2" stroke-width="1"/><rect x="1.5" y="1.5" width="15" height="10" fill="#b8b8b8"/><rect x="3" y="3" width="12" height="7" fill="#efefef"/><path d="M7.8 4.6 L11 6.5 L7.8 8.4 Z" fill="#b8b8b8"/><rect x="4" y="13.6" width="1.7" height="1.7" fill="#b8b8b8"/><rect x="8.2" y="13.6" width="1.7" height="1.7" fill="#b8b8b8"/><rect x="12.3" y="13.6" width="1.7" height="1.7" fill="#b8b8b8"/></svg><div class="a" style="left:874px;width:100px;top:962px;text-align:center;font-size:13px;color:#333;line-height:18px">31</div><div class="a" style="left:974px;width:128px;top:962px;text-align:center;font-size:13px;color:#333;line-height:18px">4,698</div><div class="a" style="left:1102px;width:100px;top:962px;text-align:center;font-size:13px;color:#333;line-height:18px">0.66%</div><div class="a" style="left:1202px;width:98px;top:962px;text-align:center;font-size:13px;color:#333;line-height:18px">10.62</div><div class="a" style="left:1303px;width:78px;top:962px;text-align:right;font-size:13px;color:#333;line-height:18px">6,600</div><svg width="17" height="18" viewBox="0 0 17 18" style="position:absolute;left:1404px;top:960px"><defs><linearGradient id="g13" x1="0" y1="0" x2="0" y2="1"><stop offset="0" stop-color="#f2f2f2"/><stop offset="1" stop-color="#8c8c8c"/></linearGradient><linearGradient id="g23" x1="0" y1="0" x2="0" y2="1"><stop offset="0" stop-color="#b2e6f8"/><stop offset="1" stop-color="#3f8fd2"/></linearGradient><linearGradient id="g33" x1="0" y1="0" x2="0" y2="1"><stop offset="0" stop-color="#7a7a7a"/><stop offset="1" stop-color="#333"/></linearGradient></defs><ellipse cx="8.5" cy="16.8" rx="8" ry="0.9" fill="rgba(0,0,0,0.07)"/><rect x="1" y="4" width="4.1" height="12.5" fill="url(#g13)"/><rect x="6" y="1" width="4.1" height="15.5" fill="url(#g23)"/><rect x="11" y="6.8" width="4.1" height="9.7" fill="url(#g33)"/></svg><svg width="16" height="17" viewBox="0 0 16 17" style="position:absolute;left:1425px;top:963px"><rect x="0.8" y="0.8" width="14.2" height="11.6" fill="#fff" stroke="#8a8a8a" stroke-width="1.6"/><path d="M4.3 15.8 L5.3 14.2 H10.5 L11.5 15.8 Z" fill="#999"/></svg><svg width="19" height="19" viewBox="0 0 19 19" style="position:absolute;left:262px;top:924px"><rect x="0.6" y="0.6" width="12.6" height="10" fill="#fff" stroke="#111" stroke-width="1.1"/><rect x="0" y="0" width="13.6" height="2.6" fill="#111"/><rect x="3.7" y="5.8" width="12.5" height="10.6" fill="#fff" stroke="#777" stroke-width="1.1"/><path d="M3.7 16.4 V5.8" stroke="#111" stroke-width="1.1"/><rect x="3.2" y="5.3" width="13.5" height="2.6" fill="#111"/><path d="M12.6 12.3 L17.6 17.3" stroke="#111" stroke-width="1.1"/><path d="M14 17.6 H17.8 V13.8" fill="none" stroke="#111" stroke-width="1.3"/></svg><div class="a" style="left:874px;top:803px;width:100px;height:39px;background:#3771b8;box-shadow:inset 0 5px 4px -2px rgba(0,0,0,0.22), inset 0 -3px 0 rgba(0,35,60,0.45)"></div><svg width="6" height="10" viewBox="0 0 6 10" style="position:absolute;left:899px;top:817px"><path d="M0 4 L3 0.5 L6 4 Z M0 6 L3 9.5 L6 6 Z" fill="#fff"/></svg><div class="a" style="left:908px;top:813px;font-size:13px;font-weight:bold;color:#fff;line-height:18px">Clicks</div><div class="a" style="left:974px;top:803px;width:128px;height:39px;background:#2894d0;box-shadow:inset 0 5px 4px -2px rgba(0,0,0,0.22), inset 0 -3px 0 rgba(0,35,60,0.45)"></div><svg width="6" height="10" viewBox="0 0 6 10" style="position:absolute;left:994px;top:817px"><path d="M0 4 L3 0.5 L6 4 Z M0 6 L3 9.5 L6 6 Z" fill="#fff"/></svg><div class="a" style="left:1003px;top:813px;font-size:13px;font-weight:bold;color:#fff;line-height:18px">Impressions</div><div class="a" style="left:1102px;top:803px;width:100px;height:39px;background:#f99b1c;box-shadow:inset 0 5px 4px -2px rgba(0,0,0,0.22), inset 0 -3px 0 rgba(0,35,60,0.45)"></div><svg width="6" height="10" viewBox="0 0 6 10" style="position:absolute;left:1133px;top:817px"><path d="M0 4 L3 0.5 L6 4 Z M0 6 L3 9.5 L6 6 Z" fill="#fff"/></svg><div class="a" style="left:1141px;top:813px;font-size:13px;font-weight:bold;color:#fff;line-height:18px">CTR</div><div class="a" style="left:1202px;top:803px;width:98px;height:39px;background:#25a05f;box-shadow:inset 0 5px 4px -2px rgba(0,0,0,0.22), inset 0 -3px 0 rgba(0,35,60,0.45)"></div><svg width="6" height="10" viewBox="0 0 6 10" style="position:absolute;left:1220px;top:817px"><path d="M0 4 L3 0.5 L6 4 Z M0 6 L3 9.5 L6 6 Z" fill="#fff"/></svg><div class="a" style="left:1228px;top:813px;font-size:13px;font-weight:bold;color:#fff;line-height:18px">Position</div><div class="a" style="left:864px;top:994px;width:445px;height:4px;background:#000"></div><div class="a" style="left:870px;top:800px;width:433px;height:198px;border:3px solid #fd3e3f;border-bottom:none;box-shadow:0 0 4px 1px rgba(0,0,0,0.18), inset 0 0 4px 1px rgba(0,0,0,0.18)"></div><div class="a" style="left:870px;top:995px;width:433px;height:3px;background:#fd3e3f"></div><svg class="a" style="left:0;top:0" width="1454" height="998" viewBox="0 0 1454 998">
<defs><filter id="sh" x="-20%" y="-20%" width="140%" height="140%"><feDropShadow dx="1" dy="1.5" stdDeviation="1.2" flood-color="#000" flood-opacity="0.35"/></filter></defs>
<g fill="#fd3e3f" filter="url(#sh)">
<path d="M745.7 658.7 L772.6 670.7 L753 686.9 Z"/>
<path d="M868.9 799.3 L861.2 771.5 L842 788.6 Z"/>
<line x1="766.8" y1="683" x2="856" y2="782.5" stroke="#fd3e3f" stroke-width="8" stroke-dasharray="8 9.8"/>
</g>
</svg>
</body></html>
